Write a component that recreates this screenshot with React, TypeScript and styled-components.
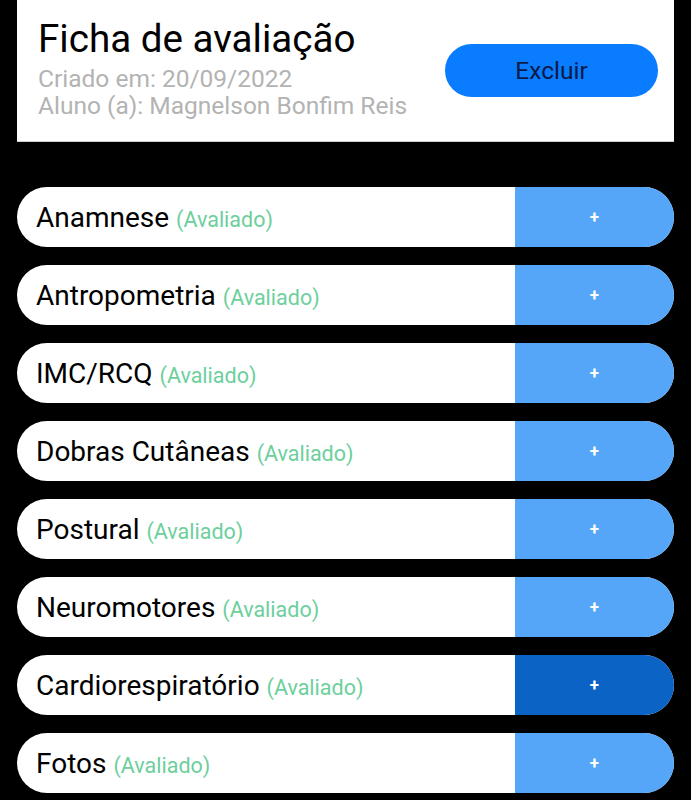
import styled, { createGlobalStyle } from 'styled-components';

interface Section {
    name: string;
    active?: boolean;
}

const sections: Section[] = [
    { name: 'Anamnese' },
    { name: 'Antropometria' },
    { name: 'IMC/RCQ' },
    { name: 'Dobras Cutâneas' },
    { name: 'Postural' },
    { name: 'Neuromotores' },
    { name: 'Cardiorespiratório', active: true },
    { name: 'Fotos' },
];

const App = () => {
    return (
        <>
            <GlobalStyle />
            <Page>
                <HeaderCard>
                    <HeaderInfo>
                        <Title>Ficha de avaliação</Title>
                        <SubText>Criado em: 20/09/2022</SubText>
                        <SubText>Aluno (a): Magnelson Bonfim Reis</SubText>
                    </HeaderInfo>
                    <DeleteButton>Excluir</DeleteButton>
                </HeaderCard>
                <SectionList>
                    {sections.map((section) => (
                        <SectionRow key={section.name}>
                            <SectionLabel>
                                <LabelText>
                                    {section.name} <Status>(Avaliado)</Status>
                                </LabelText>
                            </SectionLabel>
                            <AddButton $active={section.active}>+</AddButton>
                        </SectionRow>
                    ))}
                </SectionList>
            </Page>
        </>
    );
};

const GlobalStyle = createGlobalStyle`
    body {
        margin: 0;
        background-color: #000;
        font-family: Roboto, 'Noto Sans', Arial, sans-serif;
    }
`;

const Page = styled.div`
    min-height: 800px;
    padding: 0 17px;
    background-color: #000;
`;

const HeaderCard = styled.div`
    height: 141px;
    padding: 0 16px 0 21px;
    background-color: white;
    border-bottom: 1px solid #cfcfcf;
    display: flex;
    align-items: center;
    justify-content: space-between;
`;

const HeaderInfo = styled.div`
    display: flex;
    flex-direction: column;
    align-self: flex-start;
    padding-top: 17px;
`;

const Title = styled.div`
    font-size: 38.6px;
    line-height: 44px;
    color: #000;
    margin-bottom: 4px;
`;

const SubText = styled.div`
    font-size: 24.5px;
    line-height: 27px;
    color: #b3b3b3;
`;

const DeleteButton = styled.button`
    width: 213px;
    height: 53px;
    border: none;
    border-radius: 27px;
    background-color: #0a7cff;
    color: #0b1a48;
    font-family: Roboto, Arial, sans-serif;
    font-size: 24.5px;
    padding: 0;
    margin-top: -1px;
`;

const SectionList = styled.div`
    display: flex;
    flex-direction: column;
    gap: 18px;
    margin-top: 45px;
`;

const SectionRow = styled.div`
    height: 60px;
    display: flex;
    border-radius: 30px;
    overflow: hidden;
    background-color: white;
`;

const SectionLabel = styled.div`
    flex: 1;
    display: flex;
    align-items: center;
    padding-left: 19px;
`;

const LabelText = styled.div`
    font-size: 28px;
    color: #000;
    white-space: nowrap;
`;

const Status = styled.span`
    font-size: 21.5px;
    color: #6ccf9c;
`;

const AddButton = styled.div<{ $active?: boolean }>`
    width: 159px;
    display: flex;
    align-items: center;
    justify-content: center;
    background-color: ${({ $active }) => ($active ? '#0b63c6' : '#55a6f8')};
    color: white;
    font-size: 17px;
    font-weight: bold;
`;

export default App;
